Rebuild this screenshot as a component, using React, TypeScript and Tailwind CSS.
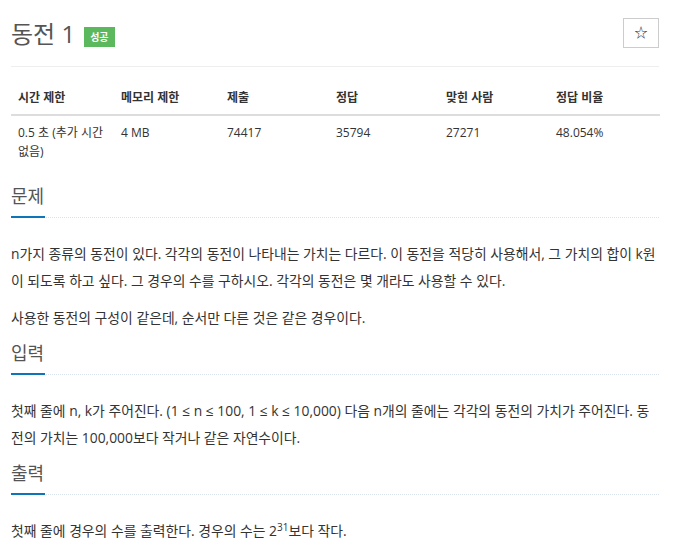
import React from 'react';

const font = { fontFamily: '"Open Sans", "Noto Sans CJK KR", sans-serif' };

function Section({ title, children }: { title: string; children: React.ReactNode }) {
  return (
    <section>
      <div className="relative border-b border-dotted border-[#d9e3ee]">
        <h2 className="text-[18px] leading-[26px] text-[#555] pb-[8px]">{title}</h2>
        <div className="absolute left-0 -bottom-px h-[2px] w-[34px] bg-[#0e76b8]" />
      </div>
      <div className="pt-[22px] text-[13.85px] text-[#333] break-all">{children}</div>
    </section>
  );
}

export default function App() {
  const cols = ['시간 제한', '메모리 제한', '제출', '정답', '맞힌 사람', '정답 비율'];
  const vals = ['0.5 초 (추가 시간 없음)', '4 MB', '74417', '35794', '27271', '48.054%'];
  const widths = ['w-[103px]', 'w-[106px]', 'w-[109px]', 'w-[110px]', 'w-[110px]', 'w-[111px]'];

  return (
    <div className="min-h-screen bg-white" style={font}>
      <div className="pl-[11px] pr-[16px]">
        {/* Title */}
        <div className="flex items-start justify-between pt-[18px] pb-[17px] border-b border-[#eee]">
          <div className="flex items-center gap-[9px] pt-[1px]">
            <h1 className="text-[24px] leading-[30px] text-[#555]">동전 1</h1>
            <span className="mt-[5px] bg-[#5cb85c] text-white text-[10px] font-semibold leading-[20px] px-[6px]">성공</span>
          </div>
          <button className="w-[36px] h-[30px] border border-[#ccc] flex items-center justify-center text-[13px] text-[#333]">☆</button>
        </div>

        {/* Info table */}
        <table className="mt-[22px] table-fixed border-collapse w-[649px] text-[12px]">
          <thead>
            <tr className="border-b-2 border-[#ddd]">
              {cols.map((c, i) => (
                <th key={c} className={`${widths[i]} text-left font-bold text-[#333] px-[7px] pb-[7px] leading-[18px]`}>{c}</th>
              ))}
            </tr>
          </thead>
          <tbody>
            <tr>
              {vals.map((v, i) => (
                <td key={v} className={`${widths[i]} align-top text-[#333] px-[7px] pt-[7px] leading-[19px]`}>{v}</td>
              ))}
            </tr>
          </tbody>
        </table>

        <div className="mt-[22px] flex flex-col gap-[9px]">
          <Section title="문제">
            <p className="leading-[27px]">
              n가지 종류의 동전이 있다. 각각의 동전이 나타내는 가치는 다르다. 이 동전을 적당히 사용해서, 그 가치의 합이 k원이 되도록 하고 싶다. 그 경우의 수를 구하시오. 각각의 동전은 몇 개라도 사용할 수 있다.
            </p>
            <p className="leading-[27px] mt-[10px]">사용한 동전의 구성이 같은데, 순서만 다른 것은 같은 경우이다.</p>
          </Section>
          <Section title="입력">
            <p className="leading-[27px]">
              첫째 줄에 n, k가 주어진다. (1 ≤ n ≤ 100, 1 ≤ k ≤ 10,000) 다음 n개의 줄에는 각각의 동전의 가치가 주어진다. 동전의 가치는 100,000보다 작거나 같은 자연수이다.
            </p>
          </Section>
          <Section title="출력">
            <p className="leading-[27px]">
              첫째 줄에 경우의 수를 출력한다. 경우의 수는 2<sup className="text-[10px]">31</sup>보다 작다.
            </p>
          </Section>
        </div>
      </div>
    </div>
  );
}
